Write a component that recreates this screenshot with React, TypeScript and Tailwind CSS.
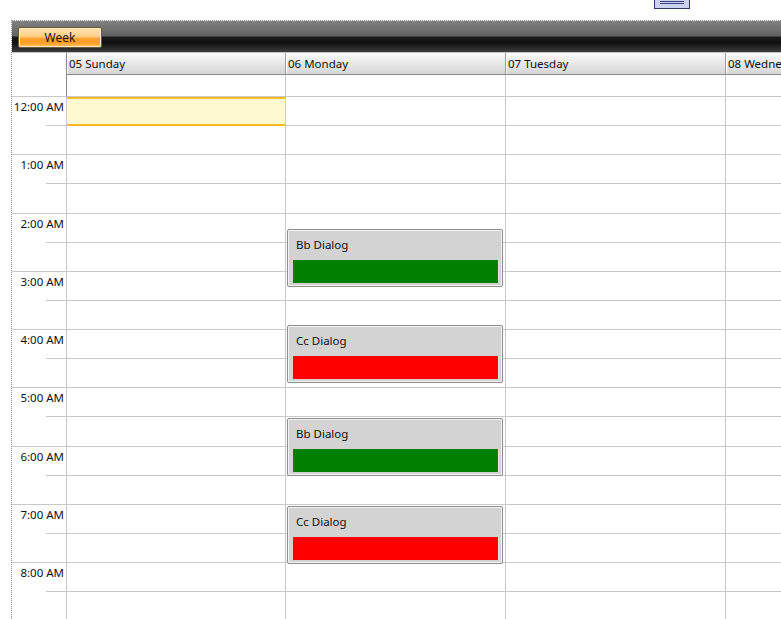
import React from 'react'
import clsx from 'clsx'

const days = [
  { label: '05 Sunday', width: 'w-[219px]' },
  { label: '06 Monday', width: 'w-[220px]' },
  { label: '07 Tuesday', width: 'w-[220px]' },
  { label: '08 Wednesday', width: 'w-[220px]' },
]

const hours = ['12:00 AM', '1:00 AM', '2:00 AM', '3:00 AM', '4:00 AM', '5:00 AM', '6:00 AM', '7:00 AM', '8:00 AM']

const appointments = [
  { title: 'Bb Dialog', bar: 'bg-[#008000]', top: 'top-[132px]' },
  { title: 'Cc Dialog', bar: 'bg-[#ff0000]', top: 'top-[228px]' },
  { title: 'Bb Dialog', bar: 'bg-[#008000]', top: 'top-[321px]' },
  { title: 'Cc Dialog', bar: 'bg-[#ff0000]', top: 'top-[409px]' },
]

function DockIcon() {
  return (
    <div className="w-[36px] h-[9px] border-x border-b border-[#33386e] bg-[#cbd2f2] flex flex-col items-center pt-[1px] gap-[1px]">
      <div className="w-[24px] h-px bg-[#3a4080]" />
      <div className="w-[24px] h-px bg-[#3a4080]" />
    </div>
  )
}

function Toolbar() {
  return (
    <div className="h-[31px] flex items-start pl-[6px] pt-[6px] bg-[linear-gradient(to_bottom,#808080_0%,#626262_48%,#1b1b1b_52%,#0f0f0f_70%,#3c3c3c_100%)]">
      <button className="w-[84px] h-[21px] rounded-[2px] border border-[#6b5a3a] shadow-[inset_0_0_0_1px_#ffe9c4] bg-[linear-gradient(to_bottom,#ffe4b2_0%,#ffcd85_48%,#ffa635_52%,#ff9b22_75%,#ffc261_100%)] text-[12px] leading-none text-[#111]">
        Week
      </button>
    </div>
  )
}

function TimeColumn() {
  return (
    <div className="w-[55px] shrink-0 border-r border-[#c9c9c9] bg-white">
      {hours.map((h) => (
        <div key={h} className="h-[58.25px] flex flex-col border-b border-[#c9c9c9]">
          <div className="h-[29.125px] flex flex-col">
            <div className="flex-1 text-right pr-[2px] pt-[2px] text-[11.5px] leading-[16px] text-[#111]">{h}</div>
            <div className="w-[20px] h-px self-end bg-[#c9c9c9]" />
          </div>
        </div>
      ))}
    </div>
  )
}

function Appointment({ title, bar, top }: { title: string; bar: string; top: string }) {
  return (
    <div
      className={clsx(
        'absolute left-[1px] w-[216px] h-[58px] rounded-[2px] border border-[#8e8e8e] bg-[#d3d3d3] shadow-[inset_0_0_0_1px_#f4f4f4] flex flex-col',
        top,
      )}
    >
      <div className="h-[30px] flex items-center pl-[8px] text-[11.5px] text-[#111]">{title}</div>
      <div className={clsx('ml-[5px] mr-[3px] h-[23px] border-r border-[#e4e4e4]', bar)} />
    </div>
  )
}

function DayColumn({ width, index }: { width: string; index: number }) {
  return (
    <div className={clsx('relative shrink-0 border-r border-[#c9c9c9]', width)}>
      {Array.from({ length: 18 }).map((_, i) =>
        i === 0 && index === 0 ? (
          // selected slot
          <div key={i} className="h-[29.125px] flex flex-col bg-[#fff9d1]">
            <div className="h-[2px] bg-[#f3bd2a]" />
            <div className="flex-1" />
            <div className="h-[2px] bg-[#f3bd2a]" />
          </div>
        ) : (
          <div key={i} className="h-[29.125px] border-b border-[#c9c9c9]" />
        ),
      )}
      {index === 1 && appointments.map((a, i) => <Appointment key={i} {...a} />)}
    </div>
  )
}

export default function App() {
  return (
    <div className="w-[781px] h-[619px] overflow-hidden bg-white font-['Noto_Sans',sans-serif]">
      <div className="h-[20px] flex justify-end pr-[91px]">
        <DockIcon />
      </div>
      <div className="ml-[11px] border-l border-t border-dotted border-[#8c8c8c] flex flex-col">
        <Toolbar />

        {/* day headers + all-day strip */}
        <div className="flex h-[45px]">
          <div className="w-[55px] shrink-0 border-t border-[#c4c4c4] border-r border-r-[#8a8a8a] border-b border-b-[#c9c9c9] bg-white" />
          <div className="flex flex-col">
            <div className="flex h-[23px] border-t border-[#c4c4c4] border-b border-b-[#8a8a8a]">
              {days.map((d) => (
                <div
                  key={d.label}
                  className={clsx(
                    'shrink-0 border-l border-white border-r border-r-[#9c9c9c] bg-[linear-gradient(to_bottom,#fafafa,#d6d6d6)] pl-[1px] pt-[1px] text-[11.5px] leading-[20px] text-[#111] whitespace-nowrap overflow-hidden',
                    d.width,
                  )}
                >
                  {d.label}
                </div>
              ))}
            </div>
            <div className="flex h-[22px] border-b border-[#c9c9c9]">
              {days.map((d) => (
                <div key={d.label} className={clsx('shrink-0 border-r border-[#c9c9c9]', d.width)} />
              ))}
            </div>
          </div>
        </div>

        <div className="flex">
          <TimeColumn />
          {days.map((d, i) => (
            <DayColumn key={d.label} width={d.width} index={i} />
          ))}
        </div>
      </div>
    </div>
  )
}
